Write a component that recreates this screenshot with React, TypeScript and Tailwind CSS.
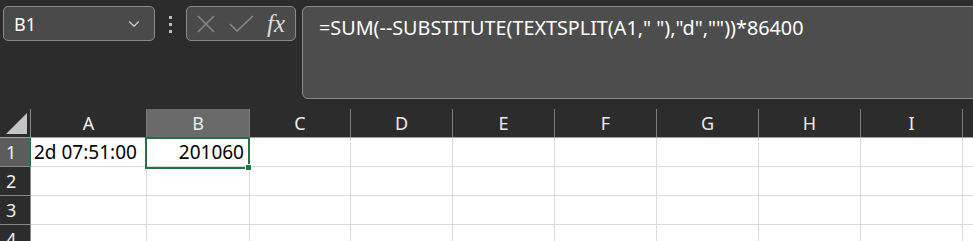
import { ChevronDown } from "lucide-react";

const columns = [
  { label: "A", width: "w-[116px]" },
  { label: "B", width: "w-[103px]" },
  { label: "C", width: "w-[101px]" },
  { label: "D", width: "w-[102px]" },
  { label: "E", width: "w-[102px]" },
  { label: "F", width: "w-[102px]" },
  { label: "G", width: "w-[102px]" },
  { label: "H", width: "w-[102px]" },
  { label: "I", width: "w-[102px]" },
  { label: "", width: "w-[102px]" },
];

const formula = '=SUM(--SUBSTITUTE(TEXTSPLIT(A1," "),"d",""))*86400';

function FormulaBar() {
  return (
    <div className="flex h-[109px] items-start pt-[6px] pl-[3px]">
      <div className="flex h-[35px] w-[152px] shrink-0 items-center justify-between rounded-[5px] border border-[#8a8a8a] bg-[#4a4a4a] pl-[10px] pr-[11px]">
        <span className="text-[18px] leading-none text-white">B1</span>
        <ChevronDown className="h-[18px] w-[18px] text-[#d6d6d6]" strokeWidth={1.5} />
      </div>
      <div className="ml-[14px] mt-[10px] flex w-[3px] flex-col gap-[4px]">
        <span className="h-[3px] w-[3px] bg-[#bdbdbd]" />
        <span className="h-[3px] w-[3px] bg-[#bdbdbd]" />
        <span className="h-[3px] w-[3px] bg-[#bdbdbd]" />
      </div>
      <div className="ml-[14px] flex h-[35px] w-[110px] shrink-0 items-center rounded-[5px] border border-[#8a8a8a] bg-[#4a4a4a]">
        <svg className="ml-[9px]" width="20" height="20" viewBox="0 0 20 20" fill="none" stroke="#8c8c8c" strokeWidth="1.4">
          <path d="M2 2 L18 18 M18 2 L2 18" />
        </svg>
        <svg className="ml-[13px]" width="26" height="18" viewBox="0 0 26 18" fill="none" stroke="#8c8c8c" strokeWidth="1.4">
          <path d="M1 9 L8 16 L24 1" />
        </svg>
        <span className="ml-[12px] font-['Liberation_Serif',serif] text-[25px] italic leading-none text-[#dcdcdc]">fx</span>
      </div>
      <div className="ml-[6px] h-[93px] w-[720px] shrink-0 rounded-[6px] border border-[#8a8a8a] bg-[#4d4d4d] pl-[16px] pt-[9px]">
        <span className="whitespace-pre text-[19.8px] leading-[24px] text-white">{formula}</span>
      </div>
    </div>
  );
}

function HeaderRow() {
  return (
    <div className="flex h-[29px] border-b border-[#a0a0a0]">
      <div className="flex w-[31px] shrink-0 items-end justify-end border-r border-[#8a8a8a] pb-[3px] pr-[3px]">
        <svg width="21" height="21" viewBox="0 0 21 21">
          <polygon points="0,21 21,21 21,0" fill="#c4c4c4" />
        </svg>
      </div>
      {columns.map((col, i) => (
        <div
          key={i}
          className={`${col.width} flex shrink-0 items-center justify-center border-r border-[#7e7e7e] text-[18px] text-[#ececec] ${
            col.label === "B" ? "bg-[#6a6a6a]" : ""
          }`}
        >
          {col.label}
        </div>
      ))}
    </div>
  );
}

function GridRow({ index }: { index: number }) {
  const selected = index === 1;
  return (
    <div className={`relative flex h-[29px] ${selected ? "z-10" : ""}`}>
      <div
        className={`flex w-[31px] shrink-0 items-center border-b border-r pl-[6px] text-[18px] text-[#f0f0f0] ${
          selected ? "border-b-[#8a8a8a] border-r-[#217346] bg-[#5c5c5c]" : "border-[#8a8a8a]"
        }`}
      >
        {index}
      </div>
      {columns.map((col, i) => (
        <div
          key={i}
          className={`${col.width} flex shrink-0 items-center border-b border-r border-[#dadada] bg-white text-[19px] text-black`}
        >
          {selected && col.label === "A" && <span className="pl-[3px]">2d 07:51:00</span>}
          {selected && col.label === "B" && <span className="ml-auto pr-[5px]">201060</span>}
        </div>
      ))}
      {selected && (
        <div className="absolute left-[145px] top-[-1px] h-[32px] w-[105px] border-2 border-[#217346]">
          <div className="absolute -bottom-[4px] -right-[4px] h-[7px] w-[7px] border border-white bg-[#217346]" />
        </div>
      )}
    </div>
  );
}

export default function App() {
  return (
    <div className="h-[241px] w-[973px] overflow-hidden bg-[#2c2c2c] font-['Noto_Sans',sans-serif]">
      <FormulaBar />
      <HeaderRow />
      {[1, 2, 3, 4].map((i) => (
        <GridRow key={i} index={i} />
      ))}
    </div>
  );
}
